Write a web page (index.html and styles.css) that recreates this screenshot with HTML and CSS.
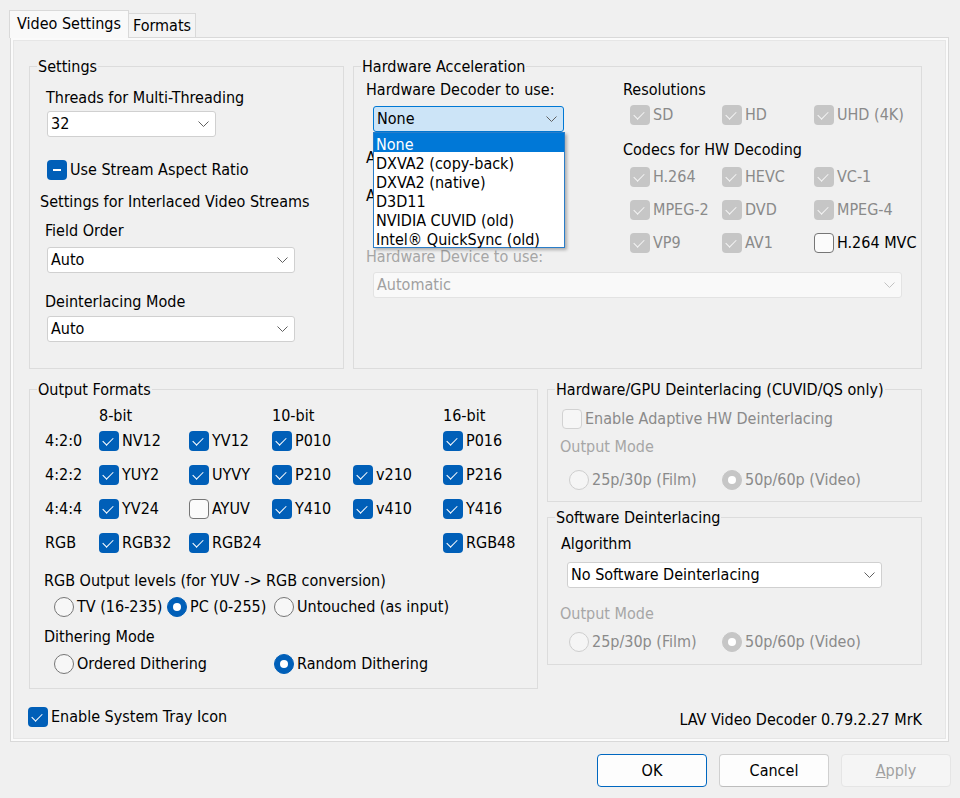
FILE: index.html
```html
<!DOCTYPE html>
<html lang="en">
<head>
<meta charset="utf-8">
<title>LAV Video Decoder Settings</title>
<link rel="stylesheet" href="styles.css">
</head>
<body>
<div class="dlg">
  <div class="tabs">
    <div class="tab tab-active">Video Settings</div>
    <div class="tab tab-idle">Formats</div>
  </div>
  <div class="panel">
    <div class="row1">
      <fieldset class="gb">
        <legend>Settings</legend>
        <div class="set-body">
          <div class="lbl m-threads">Threads for Multi-Threading</div>
          <div class="combo combo-threads"><span>32</span><svg class="chev" width="11" height="6" viewBox="0 0 11 6"><path d="M.5.5l5 5 5-5"/></svg></div>
          <label class="chk chk-aspect"><span class="box box-ind"></span><span>Use Stream Aspect Ratio</span></label>
          <div class="lbl m-inter">Settings for Interlaced Video Streams</div>
          <div class="lbl m-field">Field Order</div>
          <div class="combo combo-field"><span>Auto</span><svg class="chev" width="11" height="6" viewBox="0 0 11 6"><path d="M.5.5l5 5 5-5"/></svg></div>
          <div class="lbl m-deint">Deinterlacing Mode</div>
          <div class="combo combo-deint"><span>Auto</span><svg class="chev" width="11" height="6" viewBox="0 0 11 6"><path d="M.5.5l5 5 5-5"/></svg></div>
        </div>
      </fieldset>
      <fieldset class="gb">
        <legend>Hardware Acceleration</legend>
        <div class="hw-body">
          <div class="hw-top">
            <div class="hw-left">
              <div class="lbl hl-dec">Hardware Decoder to use:</div>
              <div class="combo combo-open combo-dec"><span>None</span><svg class="chev" width="11" height="6" viewBox="0 0 11 6"><path d="M.5.5l5 5 5-5"/></svg>
                <div class="dd">
                  <div class="dd-item dd-sel">None</div>
                  <div class="dd-item">DXVA2 (copy-back)</div>
                  <div class="dd-item">DXVA2 (native)</div>
                  <div class="dd-item">D3D11</div>
                  <div class="dd-item">NVIDIA CUVID (old)</div>
                  <div class="dd-item">Intel® QuickSync (old)</div>
                </div>
              </div>
              <div class="lbl hl-act">Active Decoder:</div>
              <div class="lbl hl-acc">Active Hardware Accelerator:</div>
              <div class="lbl dim hl-dev">Hardware Device to use:</div>
            </div>
            <div class="hw-right">
              <div class="lbl hr-res">Resolutions</div>
              <div class="cbgrid hr-resgrid">
                <label class="chk dis"><span class="box box-dison"></span><span>SD</span></label>
                <label class="chk dis"><span class="box box-dison"></span><span>HD</span></label>
                <label class="chk dis"><span class="box box-dison"></span><span>UHD (4K)</span></label>
              </div>
              <div class="lbl hr-codecs">Codecs for HW Decoding</div>
              <div class="cbgrid hr-codgrid">
                <label class="chk dis"><span class="box box-dison"></span><span>H.264</span></label>
                <label class="chk dis"><span class="box box-dison"></span><span>HEVC</span></label>
                <label class="chk dis"><span class="box box-dison"></span><span>VC-1</span></label>
                <label class="chk dis"><span class="box box-dison"></span><span>MPEG-2</span></label>
                <label class="chk dis"><span class="box box-dison"></span><span>DVD</span></label>
                <label class="chk dis"><span class="box box-dison"></span><span>MPEG-4</span></label>
                <label class="chk dis"><span class="box box-dison"></span><span>VP9</span></label>
                <label class="chk dis"><span class="box box-dison"></span><span>AV1</span></label>
                <label class="chk"><span class="box box-off"></span><span>H.264 MVC</span></label>
              </div>
            </div>
          </div>
          <div class="combo combo-dis combo-dev"><span>Automatic</span><svg class="chev" width="11" height="6" viewBox="0 0 11 6"><path d="M.5.5l5 5 5-5"/></svg></div>
        </div>
      </fieldset>
    </div>

    <div class="row2">
      <fieldset class="gb">
        <legend>Output Formats</legend>
        <div class="of-body">
          <div class="of-grid of-head"><span></span><span>8-bit</span><span></span><span>10-bit</span><span></span><span>16-bit</span></div>
          <div class="of-grid of-rows">
            <span>4:2:0</span>
            <label class="chk"><span class="box box-on"></span><span>NV12</span></label>
            <label class="chk"><span class="box box-on"></span><span>YV12</span></label>
            <label class="chk"><span class="box box-on"></span><span>P010</span></label>
            <span></span>
            <label class="chk"><span class="box box-on"></span><span>P016</span></label>

            <span>4:2:2</span>
            <label class="chk"><span class="box box-on"></span><span>YUY2</span></label>
            <label class="chk"><span class="box box-on"></span><span>UYVY</span></label>
            <label class="chk"><span class="box box-on"></span><span>P210</span></label>
            <label class="chk"><span class="box box-on"></span><span>v210</span></label>
            <label class="chk"><span class="box box-on"></span><span>P216</span></label>

            <span>4:4:4</span>
            <label class="chk"><span class="box box-on"></span><span>YV24</span></label>
            <label class="chk"><span class="box box-off"></span><span>AYUV</span></label>
            <label class="chk"><span class="box box-on"></span><span>Y410</span></label>
            <label class="chk"><span class="box box-on"></span><span>v410</span></label>
            <label class="chk"><span class="box box-on"></span><span>Y416</span></label>

            <span>RGB</span>
            <label class="chk"><span class="box box-on"></span><span>RGB32</span></label>
            <label class="chk"><span class="box box-on"></span><span>RGB24</span></label>
            <span></span>
            <span></span>
            <label class="chk"><span class="box box-on"></span><span>RGB48</span></label>
          </div>
          <div class="lbl of-lvl">RGB Output levels (for YUV -&gt; RGB conversion)</div>
          <div class="radios of-r1">
            <label class="rdi rdi-tv"><span class="rd"></span><span>TV (16-235)</span></label>
            <label class="rdi rdi-pc"><span class="rd rd-on"></span><span>PC (0-255)</span></label>
            <label class="rdi"><span class="rd"></span><span>Untouched (as input)</span></label>
          </div>
          <div class="lbl of-dith">Dithering Mode</div>
          <div class="radios of-r2">
            <label class="rdi rdi-ord"><span class="rd"></span><span>Ordered Dithering</span></label>
            <label class="rdi"><span class="rd rd-on"></span><span>Random Dithering</span></label>
          </div>
        </div>
      </fieldset>

      <div class="rcol">
        <fieldset class="gb">
          <legend>Hardware/GPU Deinterlacing (CUVID/QS only)</legend>
          <div class="hwd-body">
            <label class="chk dis hwd-chk"><span class="box box-disoff"></span><span>Enable Adaptive HW Deinterlacing</span></label>
            <div class="lbl dim hwd-om">Output Mode</div>
            <div class="radios hwd-r">
              <label class="rdi rdi-film dis"><span class="rd rd-dis"></span><span>25p/30p (Film)</span></label>
              <label class="rdi dis"><span class="rd rd-dison"></span><span>50p/60p (Video)</span></label>
            </div>
          </div>
        </fieldset>
        <fieldset class="gb">
          <legend>Software Deinterlacing</legend>
          <div class="sw-body">
            <div class="lbl sw-alg">Algorithm</div>
            <div class="combo combo-sw"><span>No Software Deinterlacing</span><svg class="chev" width="11" height="6" viewBox="0 0 11 6"><path d="M.5.5l5 5 5-5"/></svg></div>
            <div class="lbl dim sw-om">Output Mode</div>
            <div class="radios sw-r">
              <label class="rdi rdi-film dis"><span class="rd rd-dis"></span><span>25p/30p (Film)</span></label>
              <label class="rdi dis"><span class="rd rd-dison"></span><span>50p/60p (Video)</span></label>
            </div>
          </div>
        </fieldset>
      </div>
    </div>

    <div class="footer">
      <label class="chk"><span class="box box-on"></span><span>Enable System Tray Icon</span></label>
      <div class="version">LAV Video Decoder 0.79.2.27 MrK</div>
    </div>
  </div>

  <div class="btns">
    <div class="btn btn-ok">OK</div>
    <div class="btn">Cancel</div>
    <div class="btn btn-dis"><span><u>A</u>pply</span></div>
  </div>
</div>
</body>
</html>
```
FILE: styles.css
```css
* { box-sizing: border-box; }
html, body { margin: 0; padding: 0; }
body {
  width: 960px;
  height: 798px;
  overflow: hidden;
  background: #f0f0f0;
  font-family: "DejaVu Sans Condensed", "DejaVu Sans", sans-serif;
  font-stretch: semi-condensed;
  font-size: 16px;
  line-height: 20px;
  color: #000;
}
.dlg { padding-top: 10px; }

/* tabs */
.tabs { display: flex; align-items: flex-end; height: 27px; padding-left: 9px; }
.tab { border: 1px solid #d9d9d9; border-bottom: none; text-align: center; white-space: nowrap; }
.tab-active { width: 120px; height: 28px; margin-bottom: -1px; background: #f9f9f9; line-height: 26px; position: relative; z-index: 1; }
.tab-idle { width: 68px; height: 24px; margin-left: -1px; background: #f4f4f4; line-height: 23px; }

.panel {
  margin-left: 10px;
  width: 939px;
  height: 705px;
  border: 1px solid #d9d9d9;
  background: #f0f0f0;
  box-shadow: inset 0 0 0 2px #fbfbfb, inset 0 0 0 3px #e6e6e6;
  padding: 19px 26px 0 18px;
}

/* group boxes */
.gb { margin: 0; padding: 0; border: 1px solid #dcdcdc; min-width: 0; }
.gb > legend { padding: 0 1px; margin-left: 7px; line-height: 20px; height: 18px; white-space: nowrap; }

.lbl { line-height: 20px; height: 18px; white-space: nowrap; }
.dim { color: #a6a6a6; }
.dis { color: #8a8a8a; }

.row1 { display: grid; grid-template-columns: 315px 569px; column-gap: 9px; }
.row2 { display: grid; grid-template-columns: 509px 375px; column-gap: 9px; margin-top: 11px; align-items: start; }

/* combo boxes */
.combo {
  height: 26px;
  border: 1px solid #d0d0d0;
  border-radius: 3px;
  background: #fff;
  padding-left: 3px;
  display: flex;
  align-items: center;
  white-space: nowrap;
}
.combo > span { line-height: 22px; }
.chev { margin-left: auto; margin-right: 6px; flex: none; }
.chev path { fill: none; stroke: #606060; stroke-width: 1; }
.combo-open { background: #cce4f7; border-color: #0078d4; position: relative; z-index: 5; }
.combo-dis { background: #f9f9f9; border-color: #e3e3e3; color: #a0a0a0; }
.combo-dis .chev path { stroke: #c2c2c2; }

.dd {
  position: absolute;
  left: -1px;
  top: 25px;
  width: 192px;
  background: #fff;
  border: 1px solid #2a7dc8;
  box-shadow: 2px 2px 3px rgba(0, 0, 0, 0.28);
  z-index: 6;
}
.dd-item { height: 19px; line-height: 19px; padding: 2px 0 0 2px; white-space: nowrap; overflow: visible; }
.dd-sel { background: #0078d7; color: #fff; }

/* checkboxes */
.chk { display: flex; align-items: center; gap: 3px; height: 20px; white-space: nowrap; }
.box {
  width: 20px;
  height: 20px;
  border-radius: 4px;
  flex: none;
  display: flex;
  align-items: center;
  justify-content: center;
}
.box-on { background: #005fb8; }
.box-on::after, .box-dison::after {
  content: "";
  width: 9px;
  height: 5px;
  border-left: 1px solid #fff;
  border-bottom: 1px solid #fff;
  transform: translate(-1px, -1px) rotate(-45deg);
}
.box-dison { background: #c6c6c6; }
.box-dison::after { border-color: #f4f4f4; }
.box-ind { background: #005fb8; }
.box-ind::after { content: ""; width: 8px; height: 2px; background: #fff; }
.box-off { border: 1px solid #767676; background: #fbfbfb; }
.box-disoff { border: 1px solid #d2d2d2; background: #f6f6f6; }

/* radios */
.radios { display: flex; align-items: center; height: 20px; }
.rdi { display: flex; align-items: center; gap: 3px; white-space: nowrap; flex: none; }
.rd {
  width: 20px;
  height: 20px;
  border-radius: 50%;
  border: 1px solid #767676;
  background: #f7f7f7;
  flex: none;
  display: flex;
  align-items: center;
  justify-content: center;
}
.rd-on { background: #005fb8; border-color: #005fb8; }
.rd-on::after, .rd-dison::after { content: ""; width: 8px; height: 8px; border-radius: 50%; background: #fff; }
.rd-dis { border-color: #cecece; background: #f5f5f5; }
.rd-dison { background: #c6c6c6; border-color: #c6c6c6; }

/* Settings */
.set-body { display: flex; flex-direction: column; align-items: flex-start; padding-bottom: 26px; }
.m-threads { margin: 13px 0 0 16px; }
.combo-threads { margin: 5px 0 0 17px; width: 169px; }
.chk-aspect { margin: 23px 0 0 17px; }
.m-inter { margin: 12px 0 0 10px; }
.m-field { margin: 11px 0 0 15px; }
.combo-field { margin: 8px 0 0 17px; width: 248px; }
.m-deint { margin: 19px 0 0 15px; }
.combo-deint { margin: 6px 0 0 17px; width: 248px; }

/* Hardware acceleration */
.hw-body { display: flex; flex-direction: column; align-items: flex-start; }
.hw-top { display: grid; grid-template-columns: 257px auto; margin-left: 12px; }
.hw-left, .hw-right { display: flex; flex-direction: column; align-items: flex-start; }
.hl-dec { margin-top: 5px; }
.combo-dec { margin: 8px 0 0 7px; width: 191px; }
.hl-act { margin-top: 16px; }
.hl-acc { margin-top: 20px; letter-spacing: -0.4px; }
.hl-dev { margin-top: 43px; }
.hr-res { margin-top: 5px; }
.cbgrid { display: grid; grid-template-columns: repeat(3, 92px); row-gap: 13px; margin-left: 7px; }
.hr-resgrid { margin-top: 7px; }
.hr-codecs { margin-top: 15px; }
.hr-codgrid { margin-top: 9px; }
.combo-dev { margin: 7px 0 0 19px; width: 529px; }

/* Output formats */
.of-body { display: flex; flex-direction: column; align-items: flex-start; padding-bottom: 14px; }
.of-grid { display: grid; grid-template-columns: 54px 90px 83px 81px 90px 80px; margin-left: 15px; }
.of-head { margin-top: 8px; height: 18px; }
.of-rows { margin-top: 7px; row-gap: 14px; align-items: center; }
.of-lvl { margin: 18px 0 0 14px; }
.of-r1 { margin: 8px 0 0 24px; }
.rdi-tv { width: 113px; }
.rdi-pc { width: 107px; }
.of-dith { margin: 10px 0 0 14px; }
.of-r2 { margin: 9px 0 0 24px; }
.rdi-ord { width: 220px; }

/* Right column */
.rcol { display: flex; flex-direction: column; gap: 6px; }
.hwd-body { display: flex; flex-direction: column; align-items: flex-start; padding-bottom: 11px; }
.hwd-chk { margin: 11px 0 0 14px; }
.hwd-om { margin: 8px 0 0 12px; }
.hwd-r { margin: 15px 0 0 21px; }
.rdi-film { width: 153px; }
.sw-body { display: flex; flex-direction: column; align-items: flex-start; padding-bottom: 12px; }
.sw-alg { margin: 8px 0 0 13px; }
.combo-sw { margin: 10px 0 0 19px; width: 315px; }
.sw-om { margin: 16px 0 0 12px; }
.sw-r { margin: 10px 0 0 21px; }

/* footer */
.footer { display: flex; justify-content: space-between; align-items: flex-start; margin: 18px 0 0 -1px; }
.version { margin-top: 3px; white-space: nowrap; }

/* buttons */
.btns { display: flex; justify-content: flex-end; gap: 12px; padding-right: 9px; margin-top: 12px; }
.btn {
  width: 110px;
  height: 33px;
  border: 1px solid #d0d0d0;
  border-bottom-color: #bdbdbd;
  border-radius: 4px;
  background: #fdfdfd;
  display: flex;
  align-items: center;
  justify-content: center;
}
.btn-ok { border-color: #0067c0; }
.btn-dis { background: #f5f5f5; border-color: #e5e5e5; color: #a0a0a0; }
```
